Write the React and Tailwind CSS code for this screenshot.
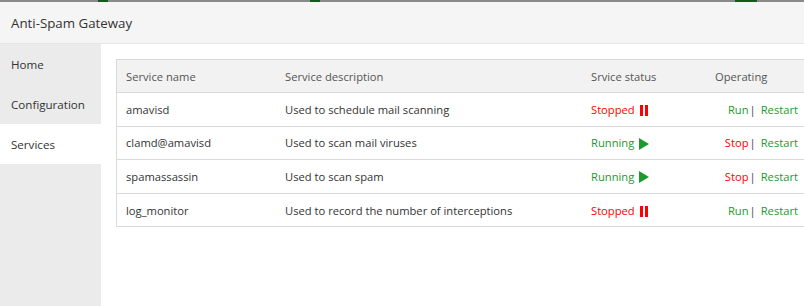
const rows = [
  { name: "amavisd", desc: "Used to schedule mail scanning", running: false },
  { name: "clamd@amavisd", desc: "Used to scan mail viruses", running: true },
  { name: "spamassassin", desc: "Used to scan spam", running: true },
  { name: "log_monitor", desc: "Used to record the number of interceptions", running: false },
];

const PauseIcon = () => (
  <svg width="9" height="11" viewBox="0 0 9 11" className="ml-[5px]">
    <rect x="0" y="0" width="3" height="11" fill="#ff0000" />
    <rect x="5" y="0" width="3" height="11" fill="#ff0000" />
  </svg>
);

const PlayIcon = () => (
  <svg width="10" height="12" viewBox="0 0 10 12" className="ml-[5px]">
    <path d="M0 0 L10 6 L0 12 Z" fill="#1c9a2e" />
  </svg>
);

const App = () => {
  return (
    <div className="h-[306px] w-[804px] overflow-hidden bg-white text-[#333] font-['Open_Sans','Noto_Sans',sans-serif]">
      <div className="flex h-[2px] bg-[#8a8a8a]">
        <div className="w-[98px]" />
        <div className="w-[10px] bg-[#145a1c]" />
        <div className="w-[202px]" />
        <div className="w-[10px] bg-[#145a1c]" />
        <div className="w-[415px]" />
        <div className="w-[22px] bg-[#145a1c]" />
      </div>
      <header className="flex h-[42px] items-center border-b border-[#e4e4e4] bg-[#f5f5f5] px-[11px] pt-[3px] text-[13.3px]">
        Anti-Spam Gateway
      </header>
      <div className="flex h-[262px]">
        <nav className="w-[101px] shrink-0 bg-[#ebebeb] text-[11.6px]">
          {["Home", "Configuration", "Services"].map((item) => (
            <div
              key={item}
              className={`flex h-[40px] items-center px-[11px] pt-[2px] ${item === "Services" ? "bg-white" : ""}`}
            >
              {item}
            </div>
          ))}
        </nav>
        <main className="flex-1 pl-[15px] pt-[15px]">
          <div className="w-[700px] border-l border-t border-[#d9d9d9] text-[11.2px]">
            <div className="flex h-[33px] items-center border-b border-[#d9d9d9] bg-[#f2f2f2] pt-[2px] text-[#555]">
              <div className="w-[159px] pl-[9px]">Service name</div>
              <div className="w-[306px] pl-[9px]">Service description</div>
              <div className="w-[124px] pl-[9px]">Srvice status</div>
              <div className="w-[101px] pl-[9px]">Operating</div>
            </div>
            {rows.map((row) => (
              <div
                key={row.name}
                className="flex h-[33.6px] items-center border-b border-[#d9d9d9] pt-[2px]"
              >
                <div className="w-[159px] pl-[9px]">{row.name}</div>
                <div className="w-[306px] pl-[9px]">{row.desc}</div>
                <div className="w-[124px] pl-[9px]">
                  {row.running ? (
                    <span className="flex items-center text-[#1c9a2e]">
                      Running
                      <PlayIcon />
                    </span>
                  ) : (
                    <span className="flex items-center text-[#ff0000]">
                      Stopped
                      <PauseIcon />
                    </span>
                  )}
                </div>
                <div className="flex w-[101px] justify-end pr-[9px]">
                  {row.running ? (
                    <span className="text-[#ff0000]">Stop</span>
                  ) : (
                    <span className="text-[#1c9a2e]">Run</span>
                  )}
                  <span className="ml-[1px] mr-[5px] text-[#444]">|</span>
                  <span className="text-[#1c9a2e]">Restart</span>
                </div>
              </div>
            ))}
          </div>
        </main>
      </div>
    </div>
  );
};

export default App;
